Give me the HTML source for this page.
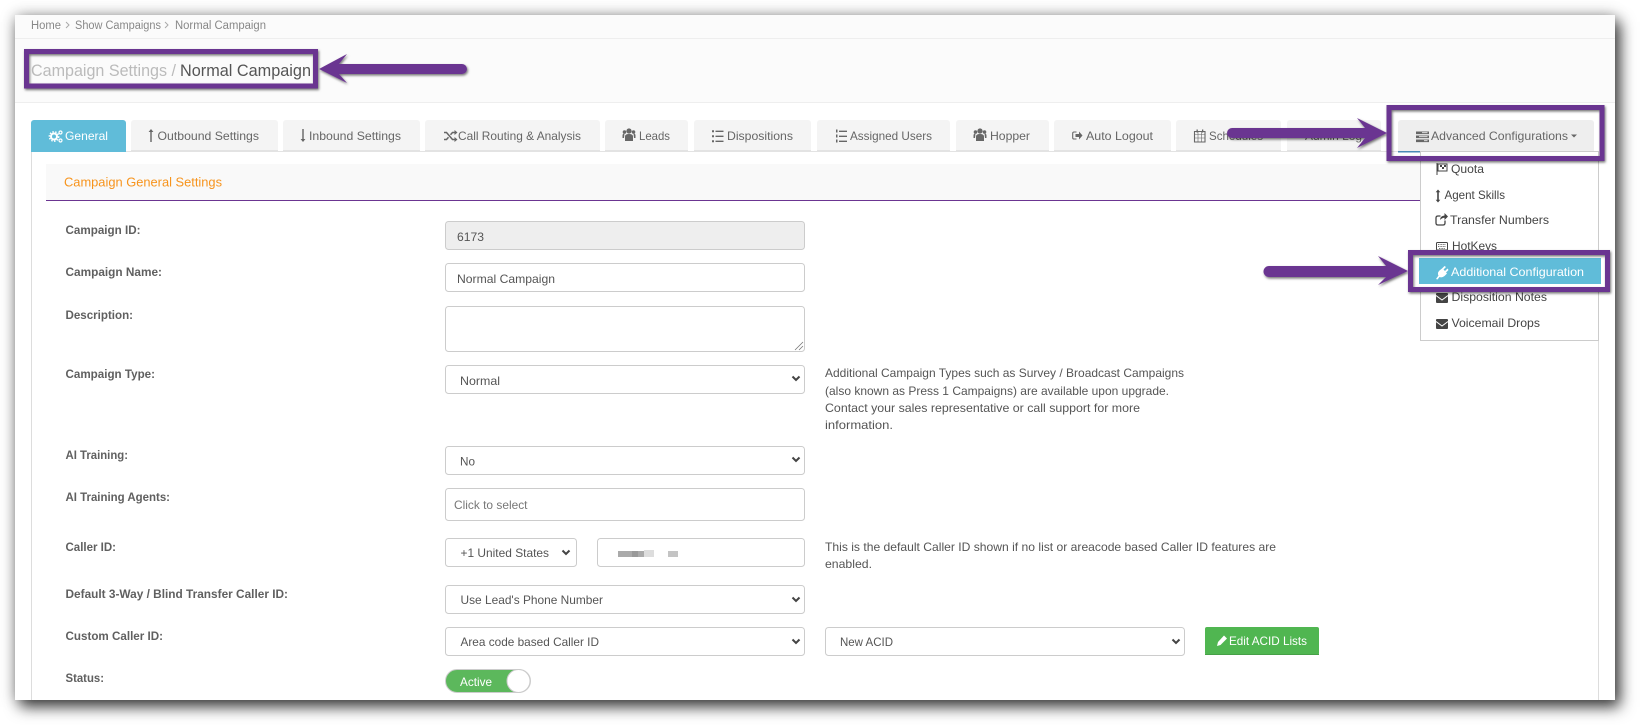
<!DOCTYPE html>
<html lang="en"><head><meta charset="utf-8"><title>Campaign Settings</title>
<style>
html,body{margin:0;padding:0;background:#fff;width:1640px;height:725px;overflow:hidden}
#page{position:absolute;left:15px;top:15px;width:1600px;height:685px;background:#fff;box-shadow:0 0 14px rgba(0,0,0,.28),5px 7px 14px rgba(0,0,0,.72)}
svg{position:absolute;left:0;top:0}
text{font-family:"Liberation Sans",sans-serif;font-size:12px;fill:#666}
.blur{filter:blur(.35px)}
.lb{font-weight:bold;fill:#606060}
.v{fill:#555}
.tb{fill:#f4f4f4}
.tl{fill:#e3e3e3}
.c{fill:#fff;stroke:#ccc;stroke-width:1}
.ch{fill:none;stroke:#444;stroke-width:2}
.ic{fill:#666}
.d{fill:#444}
.p{fill:none;stroke:#6b3591;stroke-width:5}
.ar{fill:#6b3591}
</style></head><body>
<div id="page"></div>
<svg width="1640" height="725" viewBox="0 0 1640 725" xmlns="http://www.w3.org/2000/svg">
<defs><filter id="s" x="-10%" y="-30%" width="120%" height="170%"><feDropShadow dx="1" dy="1.5" stdDeviation="1.2" flood-color="#000" flood-opacity=".55"/></filter></defs>

<!-- header bands -->
<rect x="15" y="15" width="1600" height="87" fill="#fbfbfb"/>
<rect x="15" y="38" width="1600" height="1" fill="#eee"/>
<rect x="15" y="102" width="1600" height="1" fill="#eee"/>

<g class="blur">
<text x="31" y="29" style="font-size:11.5px;fill:#888" textLength="30" lengthAdjust="spacingAndGlyphs">Home</text>
<path d="M66 22l3 3-3 3M165 22l3 3-3 3" fill="none" stroke="#aaa"/>
<text x="75" y="29" style="font-size:11.5px;fill:#888" textLength="86" lengthAdjust="spacingAndGlyphs">Show Campaigns</text>
<text x="175" y="29" style="font-size:11.5px;fill:#888" textLength="91" lengthAdjust="spacingAndGlyphs">Normal Campaign</text>
<text x="31" y="76" style="font-size:17px;fill:#bbb" textLength="145" lengthAdjust="spacingAndGlyphs">Campaign Settings /</text>
<text x="180" y="76" style="font-size:17px;fill:#555" textLength="131" lengthAdjust="spacingAndGlyphs">Normal Campaign</text>
</g>

<!-- tab content frame -->
<path d="M31.5 152V700M1598.5 152V700" stroke="#ddd" fill="none"/>
<rect x="31" y="151" width="1568" height="1" fill="#e3e3e3"/>

<!-- tabs -->
<path d="M31 152V123a3 3 0 0 1 3-3h89a3 3 0 0 1 3 3v29z" fill="#60bcd9"/>
<g>
<path class="tb" d="M131 150V123a3 3 0 0 1 3-3h141a3 3 0 0 1 3 3v27z"/><rect class="tl" x="131" y="150" width="147" height="2"/>
<path class="tb" d="M283 150V123a3 3 0 0 1 3-3h131a3 3 0 0 1 3 3v27z"/><rect class="tl" x="283" y="150" width="137" height="2"/>
<path class="tb" d="M425 150V123a3 3 0 0 1 3-3h169a3 3 0 0 1 3 3v27z"/><rect class="tl" x="425" y="150" width="175" height="2"/>
<path class="tb" d="M605 150V123a3 3 0 0 1 3-3h77a3 3 0 0 1 3 3v27z"/><rect class="tl" x="605" y="150" width="83" height="2"/>
<path class="tb" d="M694 150V123a3 3 0 0 1 3-3h111a3 3 0 0 1 3 3v27z"/><rect class="tl" x="694" y="150" width="117" height="2"/>
<path class="tb" d="M817 150V123a3 3 0 0 1 3-3h127a3 3 0 0 1 3 3v27z"/><rect class="tl" x="817" y="150" width="133" height="2"/>
<path class="tb" d="M956 150V123a3 3 0 0 1 3-3h87a3 3 0 0 1 3 3v27z"/><rect class="tl" x="956" y="150" width="93" height="2"/>
<path class="tb" d="M1054 150V123a3 3 0 0 1 3-3h111a3 3 0 0 1 3 3v27z"/><rect class="tl" x="1054" y="150" width="117" height="2"/>
<path class="tb" d="M1176 150V123a3 3 0 0 1 3-3h99a3 3 0 0 1 3 3v27z"/><rect class="tl" x="1176" y="150" width="105" height="2"/>
<path class="tb" d="M1287 150V123a3 3 0 0 1 3-3h88a3 3 0 0 1 3 3v27z"/><rect class="tl" x="1287" y="150" width="94" height="2"/>
<path d="M1398 151V123a3 3 0 0 1 3-3h190a3 3 0 0 1 3 3v28z" fill="#eee"/>
<rect x="1398" y="151" width="23" height="1.5" fill="#4a8ab5"/>
</g>

<!-- tab icons -->
<g class="blur">
<!-- gears -->
<circle cx="54" cy="136.500" r="3" fill="none" stroke="#fff" stroke-width="2"/>
<circle cx="54" cy="136.500" r="4.700" fill="none" stroke="#fff" stroke-width="1.400" stroke-dasharray="1.500 1.400"/>
<circle cx="60.500" cy="132.500" r="1.500" fill="none" stroke="#fff" stroke-width="1.200"/>
<circle cx="60.500" cy="140.500" r="1.500" fill="none" stroke="#fff" stroke-width="1.200"/>

<path d="M151 129l2.400 3h-1.700v10h-1.400v-10h-1.700z" class="ic"/>
<path d="M303 142l-2.400-3h1.700v-10h1.400v10h1.700z" class="ic"/>
<path d="M444 132.500h2.500l6 7h2.500M444 139.500h2.500l2-2.300M450.500 134.800l2-2.300h2.500" fill="none" stroke="#666" stroke-width="1.500"/><path d="M454.500 130l3 2.500-3 2.500zM454.500 137l3 2.500-3 2.500z" class="ic"/>
<g class="ic"><circle cx="629" cy="131" r="2.600"/><circle cx="624.500" cy="132" r="1.800"/><circle cx="633.500" cy="132" r="1.800"/><path d="M625 141v-4.500q0-2.500 4-2.500t4 2.500v4.500zM622.500 138v-2.500q0-2 2-2l-.5 4.500zM635.500 138v-2.500q0-2-2-2l.5 4.500z"/></g>
<path class="ic" d="M712 130.300h2v2h-2zM712 135.300h2v2h-2zM712 140.300h2v2h-2zM715.500 130.600h8v1.400h-8zM715.500 135.600h8v1.400h-8zM715.500 140.600h8v1.400h-8z"/>
<path class="ic" d="M836 129.500h1.500v3h-1.500zM836 134.500h1.500v3h-1.500zM836 139.500h1.500v3h-1.500zM839 130.600h8v1.400h-8zM839 135.600h8v1.400h-8zM839 140.600h8v1.400h-8z"/>
<g class="ic"><circle cx="980" cy="131" r="2.600"/><circle cx="975.500" cy="132" r="1.800"/><circle cx="984.500" cy="132" r="1.800"/><path d="M976 141v-4.500q0-2.500 4-2.500t4 2.500v4.500zM973.500 138v-2.500q0-2 2-2l-.5 4.500zM986.500 138v-2.500q0-2-2-2l.5 4.500z"/></g>
<path d="M1076.500 132h-2.500q-1.300 0-1.300 1.300v4.400q0 1.300 1.300 1.300h2.500" fill="none" stroke="#666" stroke-width="1.100"/><path class="ic" d="M1075.500 134h3.500v-2.500l3.500 4-3.500 4v-2.500h-3.500z"/>
<path d="M1194.500 131.500h10.500v10.500h-10.500z" fill="none" stroke="#666" stroke-width="1.100"/><path d="M1194.500 134.500h10.500M1198 131.500v10.500M1201.500 131.500v10.500M1194.500 138h10.500" stroke="#666" stroke-width=".6" fill="none"/><path class="ic" d="M1196.500 129.500h1.300v3h-1.300zM1202 129.500h1.300v3H1202z"/>
<path class="ic" d="M1416 131.500h13v2.600h-13zM1416 135.500h13v2.600h-13zM1416 139.500h13v2.600h-13z"/><path fill="#eee" d="M1422 132.200h5.500v.9H1422zM1419 136.200h8.500v.9H1419zM1424 140.200h3.500v.9H1424z"/>
<path class="ic" d="M1571 134.500h6l-3 3z"/>

<text x="65" y="140" style="fill:#fff" textLength="43" lengthAdjust="spacingAndGlyphs">General</text>
<text x="157.500" y="140" textLength="101.500" lengthAdjust="spacingAndGlyphs">Outbound Settings</text>
<text x="309" y="140" textLength="92" lengthAdjust="spacingAndGlyphs">Inbound Settings</text>
<text x="458" y="140" textLength="123" lengthAdjust="spacingAndGlyphs">Call Routing &amp; Analysis</text>
<text x="639" y="140" textLength="31" lengthAdjust="spacingAndGlyphs">Leads</text>
<text x="727" y="140" textLength="66" lengthAdjust="spacingAndGlyphs">Dispositions</text>
<text x="850" y="140" textLength="82" lengthAdjust="spacingAndGlyphs">Assigned Users</text>
<text x="990" y="140" textLength="40" lengthAdjust="spacingAndGlyphs">Hopper</text>
<text x="1086" y="140" textLength="67" lengthAdjust="spacingAndGlyphs">Auto Logout</text>
<text x="1209" y="140" textLength="54" lengthAdjust="spacingAndGlyphs">Schedules</text>
<text x="1305" y="140" textLength="57" lengthAdjust="spacingAndGlyphs">Admin Log</text>
<text x="1431" y="140" textLength="137" lengthAdjust="spacingAndGlyphs">Advanced Configurations</text>
</g>

<!-- section header -->
<rect x="46" y="164" width="1538" height="36" fill="#f9f9f9"/>
<rect x="46" y="200" width="1538" height="1" fill="#6b3591"/>
<g class="blur">
<text x="64" y="186.500" style="fill:#f7941d;font-size:12.500px" textLength="158" lengthAdjust="spacingAndGlyphs">Campaign General Settings</text>

<!-- labels -->
<text class="lb" x="65.500" y="234" textLength="75" lengthAdjust="spacingAndGlyphs">Campaign ID:</text>
<text class="lb" x="65.500" y="276" textLength="96.500" lengthAdjust="spacingAndGlyphs">Campaign Name:</text>
<text class="lb" x="65.500" y="319" textLength="67.500" lengthAdjust="spacingAndGlyphs">Description:</text>
<text class="lb" x="65.500" y="378" textLength="89.500" lengthAdjust="spacingAndGlyphs">Campaign Type:</text>
<text class="lb" x="65.500" y="459" textLength="62.500" lengthAdjust="spacingAndGlyphs">AI Training:</text>
<text class="lb" x="65.500" y="501" textLength="104.500" lengthAdjust="spacingAndGlyphs">AI Training Agents:</text>
<text class="lb" x="65.500" y="551" textLength="50.500" lengthAdjust="spacingAndGlyphs">Caller ID:</text>
<text class="lb" x="65.500" y="598" textLength="222.500" lengthAdjust="spacingAndGlyphs">Default 3-Way / Blind Transfer Caller ID:</text>
<text class="lb" x="65.500" y="640" textLength="97.500" lengthAdjust="spacingAndGlyphs">Custom Caller ID:</text>
<text class="lb" x="65.500" y="682" textLength="38.500" lengthAdjust="spacingAndGlyphs">Status:</text>
</g>

<!-- controls -->
<rect class="c" x="445.500" y="221.500" width="359" height="28" rx="3" style="fill:#eee"/>
<rect class="c" x="445.500" y="263.500" width="359" height="28" rx="3"/>
<rect class="c" x="445.500" y="306.500" width="359" height="45" rx="3"/>
<path d="M795 350l8-8M799 350l4-4" stroke="#777" stroke-width=".8" fill="none"/>
<rect class="c" x="445.500" y="365.500" width="359" height="28" rx="3"/>
<rect class="c" x="445.500" y="446.500" width="359" height="28" rx="3"/>
<rect class="c" x="445.500" y="488.500" width="359" height="32" rx="3"/>
<rect class="c" x="445.500" y="538.500" width="131" height="28" rx="3"/>
<rect class="c" x="597.500" y="538.500" width="207" height="28" rx="3"/>
<rect class="c" x="445.500" y="585.500" width="359" height="28" rx="3"/>
<rect class="c" x="445.500" y="627.500" width="359" height="28" rx="3"/>
<rect class="c" x="825.500" y="627.500" width="359" height="28" rx="3"/>
<path class="ch" d="M792.500 376.500l3.500 3.500 3.500-3.500M792.500 457.500l3.500 3.500 3.500-3.500M562.500 550.500l3.500 3.500 3.500-3.500M792.500 597.500l3.500 3.500 3.500-3.500M792.500 639.500l3.500 3.500 3.500-3.500M1172.500 639.500l3.500 3.500 3.500-3.500"/>
<!-- blurred phone -->
<rect x="618" y="551" width="26" height="6" fill="#aaa"/><rect x="632" y="551" width="6" height="6" fill="#999"/><rect x="644" y="550" width="10" height="7" fill="#ddd"/><rect x="668" y="551" width="10" height="6" fill="#c4c4c4"/>

<rect x="1205" y="627" width="114" height="28" rx="2" fill="#50b651"/>
<rect x="1205" y="654" width="114" height="1" fill="#46a047"/>
<path d="M1217 646l1-4 6-6.500 3 3-6.500 6.500z" fill="#fff"/>
<path d="M445.500 681a11.500 11.500 0 0 1 11.500-11.500h62a11.500 11.500 0 0 1 0 23h-62a11.500 11.500 0 0 1-11.500-11.500z" fill="#5cb85c" stroke="#ccc"/>
<circle cx="518.500" cy="681" r="11.500" fill="#fff" stroke="#ccc"/>

<g class="blur">
<text class="v" x="457" y="241" textLength="27" lengthAdjust="spacingAndGlyphs">6173</text>
<text class="v" x="457" y="283" textLength="98" lengthAdjust="spacingAndGlyphs">Normal Campaign</text>
<text class="v" x="460" y="385" textLength="40" lengthAdjust="spacingAndGlyphs">Normal</text>
<text class="v" x="460" y="465.500" textLength="15" lengthAdjust="spacingAndGlyphs">No</text>
<text x="454" y="509" style="fill:#777" textLength="73.500" lengthAdjust="spacingAndGlyphs">Click to select</text>
<text class="v" x="460.500" y="557" textLength="88.500" lengthAdjust="spacingAndGlyphs">+1 United States</text>
<text class="v" x="460.500" y="604" textLength="142.500" lengthAdjust="spacingAndGlyphs">Use Lead's Phone Number</text>
<text class="v" x="460.500" y="646" textLength="138.500" lengthAdjust="spacingAndGlyphs">Area code based Caller ID</text>
<text class="v" x="840" y="646" textLength="53" lengthAdjust="spacingAndGlyphs">New ACID</text>
<text x="1229" y="645" style="fill:#fff" textLength="78" lengthAdjust="spacingAndGlyphs">Edit ACID Lists</text>
<text x="460" y="686" style="fill:#fff" textLength="32" lengthAdjust="spacingAndGlyphs">Active</text>

<text class="v" x="825" y="377" textLength="359" lengthAdjust="spacingAndGlyphs">Additional Campaign Types such as Survey / Broadcast Campaigns</text>
<text class="v" x="825" y="395" textLength="344" lengthAdjust="spacingAndGlyphs">(also known as Press 1 Campaigns) are available upon upgrade.</text>
<text class="v" x="825" y="412" textLength="315" lengthAdjust="spacingAndGlyphs">Contact your sales representative or call support for more</text>
<text class="v" x="825" y="429" textLength="68" lengthAdjust="spacingAndGlyphs">information.</text>
<text class="v" x="825" y="551" textLength="451" lengthAdjust="spacingAndGlyphs">This is the default Caller ID shown if no list or areacode based Caller ID features are</text>
<text class="v" x="825" y="568" textLength="47" lengthAdjust="spacingAndGlyphs">enabled.</text>
</g>

<!-- dropdown -->
<rect x="1420.500" y="151.500" width="178" height="189" fill="#fff" stroke="#ccc"/>
<g class="blur">
<path d="M1437 163v12" stroke="#444" fill="none"/><path d="M1438 164h9v7h-9z" fill="none" stroke="#444"/><path d="M1440 165h2v2h-2zM1444 165h2v2h-2zM1442 167h2v2h-2z" class="d"/>
<text class="d" x="1451" y="173" textLength="33" lengthAdjust="spacingAndGlyphs">Quota</text>
<path d="M1438 189.500l2.300 2.700h-1.500v7.500h1.500l-2.300 2.800-2.300-2.800h1.500v-7.500h-1.500z" class="d"/>
<text class="d" x="1444.500" y="199" textLength="60.500" lengthAdjust="spacingAndGlyphs">Agent Skills</text>
<path d="M1445 220.500v2.500q0 2-2 2h-5q-2 0-2-2v-5q0-2 2-2h2.500" fill="none" stroke="#444" stroke-width="1.300"/><path d="M1440 220q0-4 4.500-4.500v-2.500l3.500 3.500-3.500 3.500v-2.300q-2.500 0-4.500 2.300z" class="d"/>
<text class="d" x="1450" y="224" textLength="99" lengthAdjust="spacingAndGlyphs">Transfer Numbers</text>
<rect x="1436.500" y="242.500" width="11" height="7.500" rx="1" fill="none" stroke="#444"/><path d="M1438 244.500h8M1438 246.500h8M1439 248.500h6" stroke="#444" stroke-width=".8" stroke-dasharray="1 .6" fill="none"/>
<text class="d" x="1452" y="250" textLength="45" lengthAdjust="spacingAndGlyphs">HotKeys</text>
<path class="d" d="M1437 293h10q1 0 1 1v8q0 1-1 1h-10q-1 0-1-1v-8q0-1 1-1z"/><path d="M1436 295.500l6 4.500 6-4.500" fill="none" stroke="#fff"/>
<text class="d" x="1451.500" y="301" textLength="95.500" lengthAdjust="spacingAndGlyphs">Disposition Notes</text>
<path class="d" d="M1437 319h10q1 0 1 1v8q0 1-1 1h-10q-1 0-1-1v-8q0-1 1-1z"/><path d="M1436 321.500l6 4.500 6-4.500" fill="none" stroke="#fff"/>
<text class="d" x="1451.500" y="327" textLength="88.500" lengthAdjust="spacingAndGlyphs">Voicemail Drops</text>
</g>
<rect x="1413" y="255" width="192" height="32" fill="#fff"/>
<rect x="1419" y="258" width="182" height="26" fill="#60bcd9"/>
<g class="blur">
<path fill="#fff" d="M1436 279l2.500-3.500q-1.500-2.500 1-5l2.500-2 2.500-2.500 1.500 1-2.500 2.500 1.500 1.500 2.500-2.500 1 1.500-2.500 2.500 1 1-2.500 2.500q-2.500 2-5 1l-2 2.500z"/>
<text x="1451" y="276" style="fill:#fff" textLength="133" lengthAdjust="spacingAndGlyphs">Additional Configuration</text>
</g>

<!-- purple annotations -->
<g filter="url(#s)">
<rect class="p" x="26.500" y="51.500" width="289" height="34.500"/>
<rect class="p" x="1389" y="107.500" width="213" height="51"/>
<rect class="p" x="1410.500" y="252.500" width="197" height="37"/>
<path class="ar" d="M319 69L347 54L339 64H462a5 5 0 0 1 0 10H339L347 83Z"/>
<path class="ar" d="M1387 133L1357 118L1365 128H1232a5 5 0 0 0 0 10H1365L1357 148Z"/>
<path class="ar" d="M1408 271L1378 256L1386 266H1269a5.500 5.500 0 0 0 0 11H1386L1378 285Z"/>
</g>
</svg>
</body></html>
